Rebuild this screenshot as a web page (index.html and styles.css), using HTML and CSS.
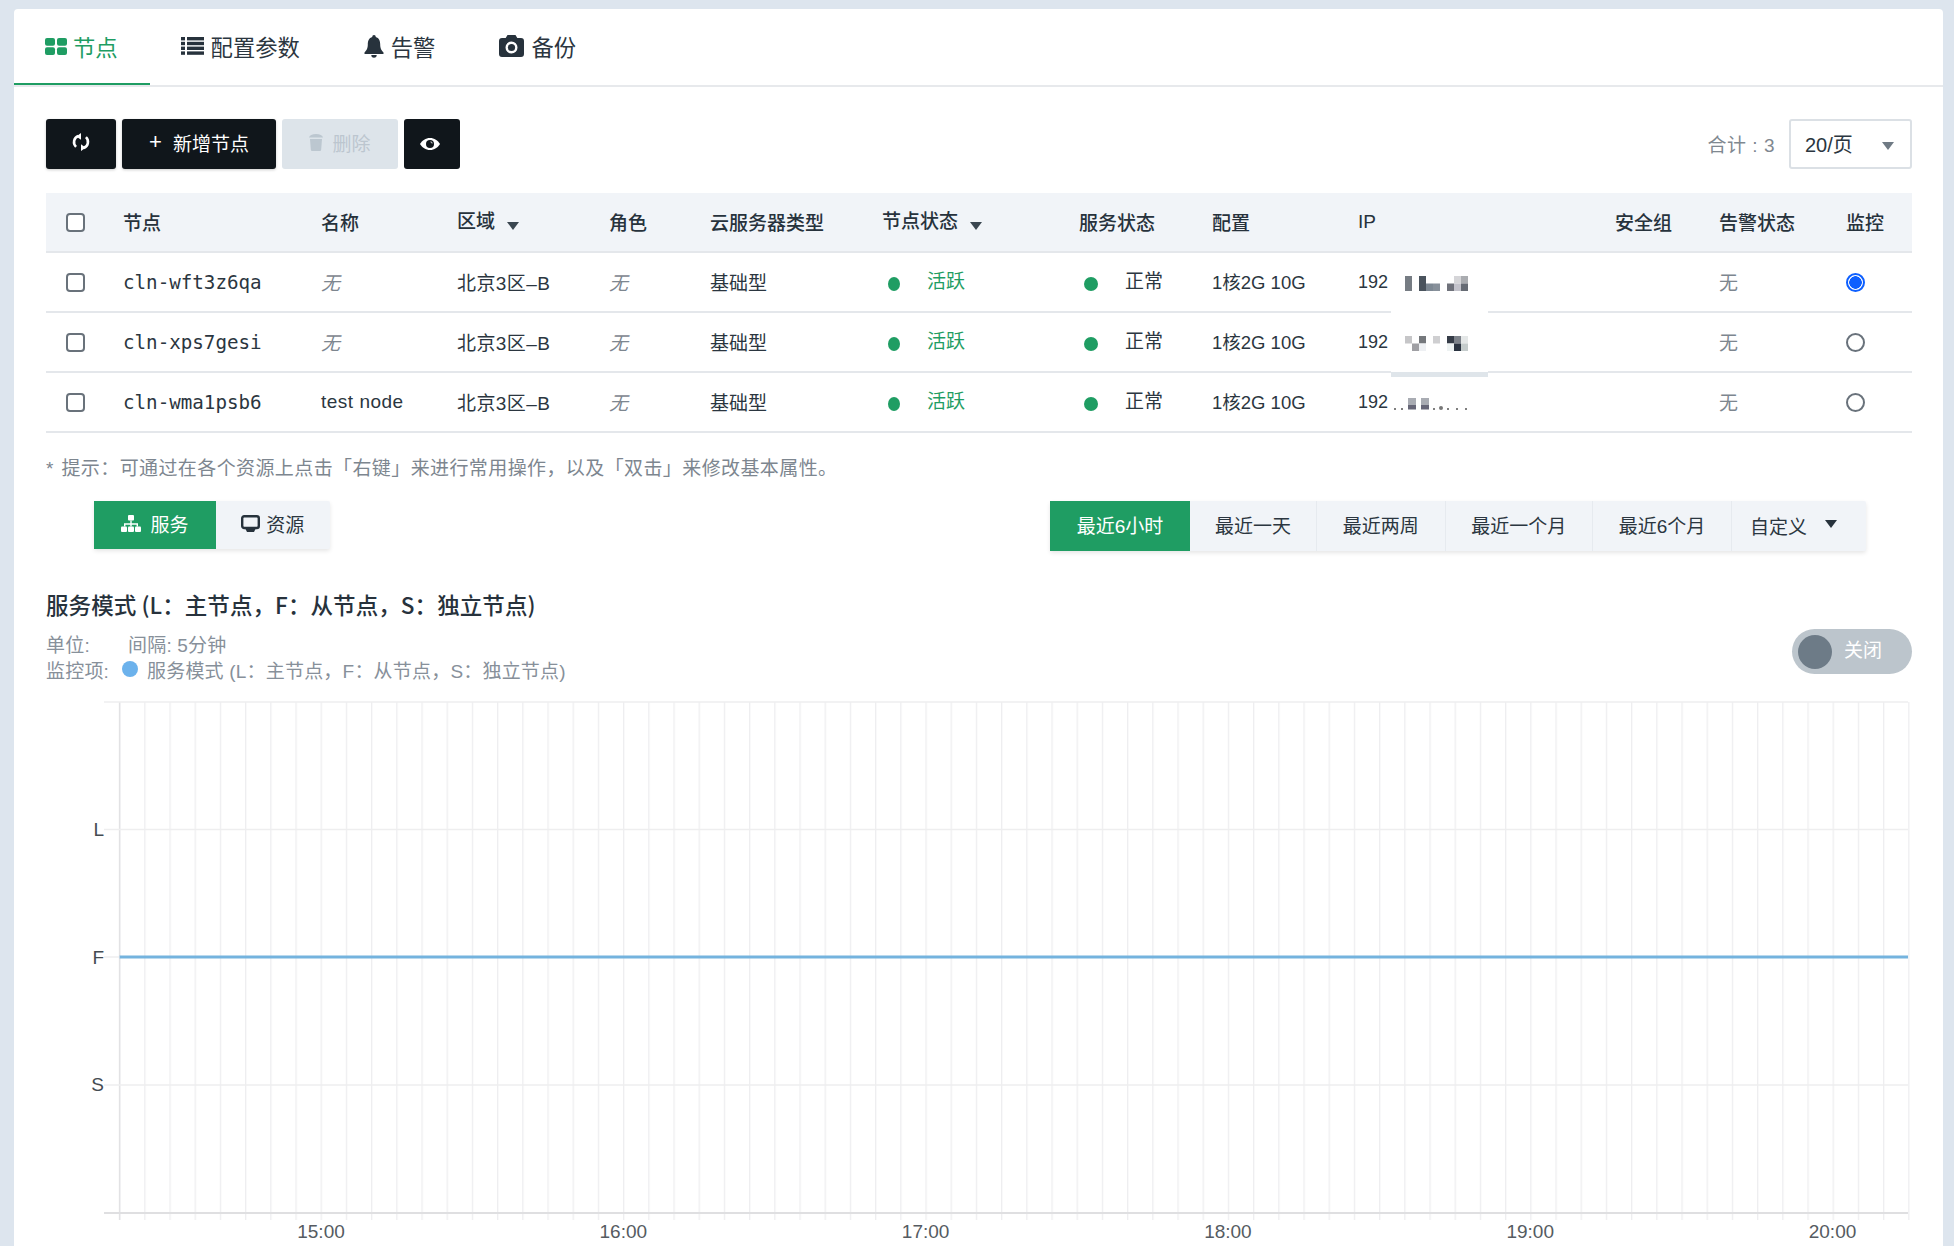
FILE: index.html
```html
<!DOCTYPE html>
<html lang="zh-CN">
<head>
    <meta charset="UTF-8">
    <title>节点</title>
    <link rel="stylesheet" href="styles.css">
</head>
<body>
    <div class="card">
        <div class="tabs">
            <a class="tab active">
                <svg class="tab-icon" width="22" height="17" viewBox="0 0 22 17"><rect x="0" y="0" width="10" height="7.800" rx="2"/><rect x="12" y="0" width="10" height="7.800" rx="2"/><rect x="0" y="9.200" width="10" height="7.800" rx="2"/><rect x="12" y="9.200" width="10" height="7.800" rx="2"/></svg>
                节点
            </a>
            <a class="tab">
                <svg class="tab-icon" width="23" height="18" viewBox="0 0 23 18"><rect x="0" y="0" width="4" height="3.400"/><rect x="6" y="0" width="17" height="3.400"/><rect x="0" y="4.800" width="4" height="3.400"/><rect x="6" y="4.800" width="17" height="3.400"/><rect x="0" y="9.600" width="4" height="3.400"/><rect x="6" y="9.600" width="17" height="3.400"/><rect x="0" y="14.400" width="4" height="3.400"/><rect x="6" y="14.400" width="17" height="3.400"/></svg>
                配置参数
            </a>
            <a class="tab">
                <svg class="tab-icon" width="20" height="23" viewBox="0 0 20 23"><path d="M10 0a1.700 1.700 0 0 1 1.700 1.900C15 2.800 16.200 5.800 16.200 9.500c0 4.400 1.600 6 3.300 8v1.500H.5v-1.500c1.700-2 3.300-3.600 3.300-8 0-3.700 1.200-6.700 4.500-7.600A1.700 1.700 0 0 1 10 0zM7.300 20h5.400a2.700 2.700 0 0 1-5.400 0z"/></svg>
                告警
            </a>
            <a class="tab">
                <svg class="tab-icon" width="25" height="22" viewBox="0 0 25 22"><path fill-rule="evenodd" d="M8.500 0h8l1.800 3h3.700a3 3 0 0 1 3 3v13a3 3 0 0 1-3 3H3a3 3 0 0 1-3-3V6a3 3 0 0 1 3-3h3.700zM12.500 6.500a6 6 0 1 0 0 12 6 6 0 0 0 0-12z"/><circle cx="12.500" cy="12.500" r="3.600"/></svg>
                备份
            </a>
        </div>

        <div class="content">
            <div class="toolbar">
                <button class="btn btn-icon-only">
                    <svg width="18" height="18" viewBox="0 0 16 16" fill="none" stroke="#fff" stroke-width="2.300"><path d="M5.500 2.700A5.800 5.800 0 0 0 3.600 12.300"/><path d="M10.500 13.300A5.800 5.800 0 0 0 12.400 3.700"/><path d="M8 0v6L3.800 3z" fill="#fff" stroke="none"/><path d="M8 16v-6l4.200 3z" fill="#fff" stroke="none"/></svg>
                </button>
                <button class="btn btn-add"><span class="plus">+</span><span>新增节点</span></button>
                <button class="btn btn-disabled">
                    <svg width="14" height="18" viewBox="0 0 14 18" fill="#bcc7d0"><path d="M0 4.500C.5 2.300 3 1 7 1s6.500 1.300 7 3.500z"/><path d="M1 6h12l-.8 10.500a1.500 1.500 0 0 1-1.500 1.500H3.300a1.500 1.500 0 0 1-1.500-1.500z"/></svg>
                    <span>删除</span>
                </button>
                <button class="btn btn-eye">
                    <svg width="20" height="12" viewBox="0 0 20 12"><path fill="#fff" d="M10 0c4.300 0 7.800 2.500 10 6-2.200 3.500-5.700 6-10 6S2.200 9.500 0 6c2.200-3.500 5.700-6 10-6z"/><circle cx="10" cy="6" r="4" fill="#10161b"/><path fill="#fff" d="M10 4a2 2 0 0 1 2 2 1.200 1.200 0 0 0-2-2z"/></svg>
                </button>
                <div class="pager">
                    <span class="total">合计 : 3</span>
                    <div class="page-size">20/页<i class="caret caret-grey"></i></div>
                </div>
            </div>

            <table class="nodes">
                <colgroup>
                    <col class="c-check"><col class="c-node"><col class="c-name"><col class="c-zone"><col class="c-role"><col class="c-type"><col class="c-state"><col class="c-service"><col class="c-spec"><col class="c-ip"><col class="c-group"><col class="c-alarm"><col class="c-monitor">
                </colgroup>
                <thead>
                    <tr>
                        <th class="flush"><input type="checkbox" class="check"></th>
                        <th>节点</th>
                        <th>名称</th>
                        <th><span class="raised">区域</span><i class="caret"></i></th>
                        <th>角色</th>
                        <th>云服务器类型</th>
                        <th><span class="raised">节点状态</span><i class="caret"></i></th>
                        <th>服务状态</th>
                        <th>配置</th>
                        <th class="flush">IP</th>
                        <th>安全组</th>
                        <th>告警状态</th>
                        <th>监控</th>
                    </tr>
                </thead>
                <tbody>
                    <tr>
                        <td class="flush"><input type="checkbox" class="check"></td>
                        <td class="flush mono">cln-wft3z6qa</td>
                        <td class="none">无</td>
                        <td class="zone">北京3区–B</td>
                        <td class="none">无</td>
                        <td>基础型</td>
                        <td><span class="dot dot-state"></span><span class="active-text raised">活跃</span></td>
                        <td><span class="dot dot-service"></span><span class="raised">正常</span></td>
                        <td class="spec">1核2G 10G</td>
                        <td class="flush ip">192
                            <svg class="mosaic" width="63" height="15" viewBox="0 0 63 15">
                                <rect x="0" y="0" width="7" height="15" fill="#767c83"/>
                                <rect x="14" y="0" width="7" height="15" fill="#4a535d"/>
                                <rect x="21" y="7.500" width="7" height="7.500" fill="#7d8893"/>
                                <rect x="28" y="7.500" width="7" height="7.500" fill="#87909a"/>
                                <rect x="42" y="7.500" width="7" height="7.500" fill="#6f727b"/>
                                <rect x="49" y="0" width="7" height="7.500" fill="#d5d5d8"/>
                                <rect x="49" y="7.500" width="7" height="7.500" fill="#c3c3cb"/>
                                <rect x="56" y="0" width="7" height="7.500" fill="#aaacb0"/>
                                <rect x="56" y="7.500" width="7" height="7.500" fill="#666b74"/>
                            </svg>
                        </td>
                        <td></td>
                        <td class="alarm">无</td>
                        <td class="flush"><input type="radio" class="radio" name="monitor" checked></td>
                    </tr>
                    <tr>
                        <td class="flush"><input type="checkbox" class="check"></td>
                        <td class="flush mono">cln-xps7gesi</td>
                        <td class="none">无</td>
                        <td class="zone">北京3区–B</td>
                        <td class="none">无</td>
                        <td>基础型</td>
                        <td><span class="dot dot-state"></span><span class="active-text raised">活跃</span></td>
                        <td><span class="dot dot-service"></span><span class="raised">正常</span></td>
                        <td class="spec">1核2G 10G</td>
                        <td class="flush ip">192
                            <span class="ip-cover"></span>
                            <svg class="mosaic" width="63" height="15" viewBox="0 0 63 15">
                                <rect x="0" y="0" width="7" height="7.500" fill="#c6c6c8"/>
                                <rect x="7" y="7.500" width="7" height="7.500" fill="#a0a0a4"/>
                                <rect x="14" y="0" width="7" height="7.500" fill="#75787c"/>
                                <rect x="14" y="7.500" width="7" height="7.500" fill="#eef0f3"/>
                                <rect x="28" y="0" width="7" height="7.500" fill="#cfcfd1"/>
                                <rect x="42" y="0" width="7" height="7.500" fill="#353c47"/>
                                <rect x="42" y="7.500" width="7" height="7.500" fill="#edf2f2"/>
                                <rect x="49" y="0" width="7" height="7.500" fill="#7d828a"/>
                                <rect x="49" y="7.500" width="7" height="7.500" fill="#2a3340"/>
                                <rect x="56" y="0" width="7" height="7.500" fill="#e4e7e7"/>
                                <rect x="56" y="7.500" width="7" height="7.500" fill="#c5cccc"/>
                            </svg>
                        </td>
                        <td></td>
                        <td class="alarm">无</td>
                        <td class="flush"><input type="radio" class="radio" name="monitor"></td>
                    </tr>
                    <tr>
                        <td class="flush"><input type="checkbox" class="check"></td>
                        <td class="flush mono">cln-wma1psb6</td>
                        <td class="flush name-text">test node</td>
                        <td class="zone">北京3区–B</td>
                        <td class="none">无</td>
                        <td>基础型</td>
                        <td><span class="dot dot-state"></span><span class="active-text raised">活跃</span></td>
                        <td><span class="dot dot-service"></span><span class="raised">正常</span></td>
                        <td class="spec">1核2G 10G</td>
                        <td class="flush ip">192
                            <svg class="mosaic mosaic-last" width="80" height="15" viewBox="0 0 80 15">
                                <circle cx="2" cy="13" r="1" fill="#555"/>
                                <circle cx="9" cy="13" r="1" fill="#555"/>
                                <rect x="15" y="2" width="8" height="7" fill="#a9acb3"/>
                                <rect x="15" y="9" width="8" height="4.500" fill="#667"/>
                                <rect x="28" y="2" width="8" height="7" fill="#a9acb3"/>
                                <rect x="28" y="9" width="8" height="4.500" fill="#667"/>
                                <circle cx="41" cy="13" r="1" fill="#555"/>
                                <circle cx="48" cy="12" r="2" fill="#777"/>
                                <circle cx="55" cy="13" r="1" fill="#555"/>
                                <circle cx="64" cy="13" r="1" fill="#555"/>
                                <circle cx="73" cy="13" r="1" fill="#555"/>
                            </svg>
                        </td>
                        <td></td>
                        <td class="alarm">无</td>
                        <td class="flush"><input type="radio" class="radio" name="monitor"></td>
                    </tr>
                </tbody>
            </table>

            <p class="hint">* 提示：可通过在各个资源上点击「右键」来进行常用操作，以及「双击」来修改基本属性。</p>

            <div class="range-row">
                <div class="segment">
                    <a class="seg seg-service active">
                        <svg width="20" height="17" viewBox="0 0 20 17" fill="#fff"><rect x="7" y="0" width="6" height="5.500" rx="1"/><path d="M9.300 5.500h1.400v2.800H17v3.200h-1.400V9.700H10.700v1.800H9.300V9.700H4.400v1.800H3V8.300h6.300z"/><rect x="0" y="11.500" width="6" height="5.500" rx="1"/><rect x="7" y="11.500" width="6" height="5.500" rx="1"/><rect x="14" y="11.500" width="6" height="5.500" rx="1"/></svg>
                        <span>服务</span>
                    </a>
                    <a class="seg seg-resource">
                        <svg width="19" height="17" viewBox="0 0 19 17"><rect x="1.200" y="1.200" width="16.600" height="11.800" rx="2" fill="none" stroke="#27323c" stroke-width="2.400"/><path d="M4.500 14h10l-1.500 3H6z" fill="#27323c"/></svg>
                        <span>资源</span>
                    </a>
                </div>
                <div class="segment segment-range">
                    <a class="seg r-6h active">最近6小时</a>
                    <a class="seg r-day">最近一天</a>
                    <a class="seg r-2w">最近两周</a>
                    <a class="seg r-month">最近一个月</a>
                    <a class="seg r-6m">最近6个月</a>
                    <a class="seg r-custom"><span class="custom-label">自定义</span><i class="caret caret-custom"></i></a>
                </div>
            </div>

            <div class="chart-head">
                <div>
                    <h3>服务模式 (L：主节点，F：从节点，S：独立节点)</h3>
                    <div class="meta"><span class="meta-unit">单位:</span><span>间隔: 5分钟</span></div>
                    <div class="meta"><span class="meta-item">监控项:</span><span class="legend-dot"></span><span>服务模式 (L：主节点，F：从节点，S：独立节点)</span></div>
                </div>
                <div class="toggle"><span class="knob"></span><span class="toggle-text">关闭</span></div>
            </div>

            <svg class="chart" width="1865" height="563" viewBox="0 0 1865 563">
                <defs>
                    <pattern id="vgrid" patternUnits="userSpaceOnUse" x="73" y="0" width="25.200" height="10">
                        <rect x="0" y="0" width="1.300" height="10" fill="#eeeef0"/>
                    </pattern>
                </defs>
                <rect x="73" y="19" width="1791" height="518" fill="url(#vgrid)"/>
                <line x1="73.600" y1="19" x2="73.600" y2="537" stroke="#e2e2e4" stroke-width="1.500"/>
                <g stroke="#eeeeef" stroke-width="1.500">
                    <line x1="58" y1="19" x2="1862" y2="19"/>
                    <line x1="58" y1="146.500" x2="1862" y2="146.500"/>
                    <line x1="58" y1="274" x2="1862" y2="274"/>
                    <line x1="58" y1="402" x2="1862" y2="402"/>
                </g>
                <line x1="58" y1="530" x2="1862" y2="530" stroke="#dfdfe1" stroke-width="2"/>
                <line x1="73.600" y1="274" x2="1862" y2="274" stroke="#74b3de" stroke-width="3"/>
                <g class="axis-y">
                    <text x="58" y="153">L</text>
                    <text x="58" y="281">F</text>
                    <text x="58" y="408">S</text>
                </g>
                <g class="axis-x">
                    <text x="275" y="555">15:00</text>
                    <text x="577.300" y="555">16:00</text>
                    <text x="879.600" y="555">17:00</text>
                    <text x="1181.900" y="555">18:00</text>
                    <text x="1484.200" y="555">19:00</text>
                    <text x="1786.500" y="555">20:00</text>
                </g>
            </svg>
        </div>
    </div>
</body>
</html>
```

FILE: styles.css
```css
* {
    box-sizing: border-box;
}
html, body {
    height: 100%;
}
body {
    margin: 0;
    padding: 9px 11px 0 14px;
    background: #dde5ee;
    font-family: "Liberation Sans", "Noto Sans CJK SC", sans-serif;
    font-size: 19px;
    color: #2b3640;
    overflow: hidden;
}
.card {
    background: #fff;
    border-radius: 4px 4px 0 0;
    height: 100%;
    overflow: hidden;
}

/* tabs */
.tabs {
    display: flex;
    height: 78px;
    border-bottom: 2px solid #e7e9ec;
}
.tab {
    display: flex;
    align-items: center;
    gap: 7px;
    height: 76px;
    padding: 0 33px 0 31px;
    font-size: 22.300px;
    color: #2b3640;
    border-bottom: 2px solid transparent;
}
.tab.active {
    gap: 6px;
    padding-right: 32px;
    color: #1f9d63;
    border-bottom-color: #1f9d63;
}
.tab-icon {
    fill: #27323c;
}
.tab.active .tab-icon {
    fill: #1f9d63;
}

.content {
    padding: 32px 31px 0 32px;
}

/* toolbar */
.toolbar {
    display: flex;
    align-items: stretch;
    gap: 6px;
    height: 50px;
    margin-bottom: 24px;
}
.btn {
    display: flex;
    align-items: center;
    justify-content: center;
    padding: 0 0 4px;
    border: none;
    border-radius: 3px;
    background: #10161b;
    color: #fff;
    font: inherit;
    box-shadow: 0 1px 3px rgba(0, 0, 0, 0.2);
}
.btn-icon-only {
    width: 70px;
}
.btn-add {
    width: 154px;
}
.plus {
    font-size: 22px;
    margin-right: 11px;
}
.btn-disabled {
    width: 116px;
    gap: 9px;
    background: #dde4ea;
    color: #bcc6cf;
    box-shadow: none;
}
.btn-eye {
    width: 56px;
    padding: 0 5px 0 0;
    box-shadow: none;
}
.pager {
    display: flex;
    align-items: center;
    gap: 14px;
    margin-left: auto;
}
.total {
    padding-bottom: 2px;
    letter-spacing: 0.500px;
    color: #7f8890;
}
.page-size {
    display: flex;
    align-items: center;
    justify-content: space-between;
    width: 123px;
    height: 50px;
    padding: 0 16px 2px 14px;
    border: 2px solid #dbe0e5;
    border-radius: 3px;
    font-size: 20px;
    color: #2b3640;
}

/* carets */
.caret {
    display: inline-block;
    margin-left: 12px;
    border-left: 6px solid transparent;
    border-right: 6px solid transparent;
    border-top: 8px solid #3a4650;
    vertical-align: 0;
}
.caret-grey {
    border-top-color: #6f7a84;
    margin-top: 6px;
}
.caret-custom {
    margin-left: 18px;
    border-top-color: #27323c;
}

/* table */
.nodes {
    width: 1866px;
    table-layout: fixed;
    border-collapse: separate;
    border-spacing: 0;
}
.c-check { width: 77px; }
.c-node { width: 198px; }
.c-name { width: 136px; }
.c-zone { width: 152px; }
.c-role { width: 101px; }
.c-type { width: 172px; }
.c-state { width: 197px; }
.c-service { width: 133px; }
.c-spec { width: 146px; }
.c-ip { width: 257px; }
.c-group { width: 104px; }
.c-alarm { width: 127px; }
.c-monitor { width: 66px; }

.nodes th, .nodes td {
    height: 60px;
    padding: 0 0 2px;
    text-align: left;
    white-space: nowrap;
    border-bottom: 2px solid #e4e7eb;
}
.nodes th {
    background: #f1f4f8;
    font-weight: 500;
    color: #27323c;
}
.nodes .flush {
    padding-bottom: 0;
}
.nodes th:first-child, .nodes td:first-child {
    padding-left: 20px;
}
.raised {
    position: relative;
    top: -2px;
}
.check {
    appearance: none;
    display: block;
    width: 19px;
    height: 19px;
    margin: 0;
    border: 2px solid #69727b;
    border-radius: 4px;
    background: #fff;
}
.radio {
    appearance: none;
    display: block;
    width: 19px;
    height: 19px;
    margin: 0;
    border: 2px solid #69727b;
    border-radius: 50%;
    background: #fff;
}
.radio:checked {
    border-color: #0d5fff;
    background: radial-gradient(circle, #0d5fff 0, #0d5fff 6px, #fff 6.500px);
}
.mono {
    font-family: "DejaVu Sans Mono", monospace;
    font-size: 19.200px;
}
.name-text {
    letter-spacing: 0.500px;
}
.zone {
    letter-spacing: 0.400px;
}
.spec {
    font-size: 18.500px;
}
.none {
    font-style: italic;
    color: #7d868f;
}
.alarm {
    color: #7d868f;
}
.dot {
    display: inline-block;
    width: 14px;
    height: 14px;
    border-radius: 50%;
    background: #1f9d63;
    vertical-align: -1px;
}
.dot-state {
    width: 12px;
    margin-left: 6px;
    margin-right: 27px;
}
.dot-service {
    margin-left: 5px;
    margin-right: 27px;
}
.active-text {
    color: #1f9d63;
}
.ip {
    position: relative;
    font-size: 18px;
}
.ip-cover {
    position: absolute;
    left: 33px;
    top: -2px;
    width: 97px;
    height: 66px;
    background: #fff;
    border-bottom: 5px solid #dfe5ea;
}
.mosaic {
    position: relative;
    margin-left: 12px;
    vertical-align: -3px;
}
.mosaic-last {
    margin-left: 0;
}

.hint {
    margin: 24px 0 0;
    line-height: 24px;
    letter-spacing: 0.400px;
    word-spacing: 2px;
    color: #7d868f;
}

/* range switches */
.range-row {
    display: flex;
    justify-content: space-between;
    align-items: flex-start;
    margin-top: 20px;
    padding: 0 46px 0 48px;
}
.segment {
    display: flex;
    height: 48px;
    background: #f1f4f8;
    box-shadow: 0 2px 4px rgba(0, 0, 0, 0.1);
    border-radius: 2px;
}
.segment-range {
    height: 50px;
}
.seg {
    display: flex;
    align-items: center;
    justify-content: center;
    padding-bottom: 4px;
    color: #2b3640;
    border-right: 1px solid #e6eaef;
}
.seg.active {
    background: #1f9d63;
    color: #fff;
    border-right: none;
}
.seg-service {
    width: 122px;
    gap: 9px;
}
.seg-resource {
    width: 113.500px;
    gap: 6px;
    border-right: none;
}
.r-6h { width: 140px; }
.r-day { width: 127px; }
.r-2w { width: 128.500px; }
.r-month { width: 147.500px; }
.r-6m { width: 139px; }
.r-custom {
    justify-content: flex-start;
    width: 134px;
    padding-left: 18px;
    border-right: none;
}
.custom-label {
    padding-top: 3px;
}

/* chart */
.chart-head {
    display: flex;
    justify-content: space-between;
    align-items: flex-end;
    margin-top: 38px;
}
.chart-head h3 {
    margin: 0 0 11px;
    line-height: 30px;
    font-family: "Noto Sans CJK SC", sans-serif;
    font-size: 22.500px;
    font-weight: 500;
    letter-spacing: 0.080px;
    color: #27323c;
}
.meta {
    display: flex;
    align-items: center;
    height: 26px;
    letter-spacing: 0.200px;
    color: #87909a;
}
.meta-unit {
    width: 82px;
}
.meta-item {
    width: 76px;
}
.legend-dot {
    width: 16px;
    height: 16px;
    margin-right: 9px;
    border-radius: 50%;
    background: #6cb2ec;
}
.toggle {
    display: flex;
    align-items: center;
    width: 120px;
    height: 45px;
    margin-bottom: 8px;
    padding-left: 6px;
    border-radius: 23px;
    background: #bcc5cc;
}
.knob {
    width: 34px;
    height: 34px;
    border-radius: 50%;
    background: #6d7b87;
}
.toggle-text {
    margin-left: 12px;
    margin-top: -7px;
    color: #fff;
}
.chart {
    display: block;
    margin-top: 1px;
}
.axis-y text {
    font-size: 19px;
    fill: #444b52;
    text-anchor: end;
}
.axis-x text {
    font-size: 19px;
    fill: #555b61;
    text-anchor: middle;
}
```
